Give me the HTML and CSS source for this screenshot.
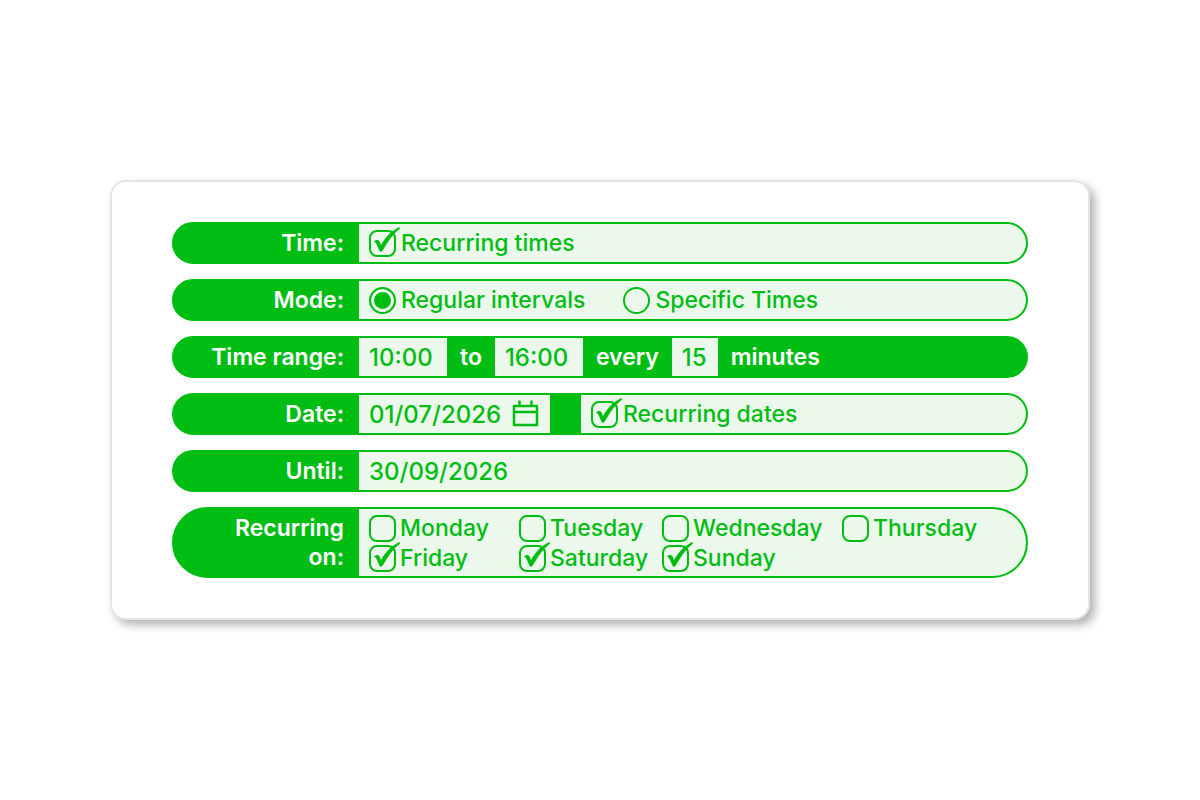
FILE: index.html
```html
<!DOCTYPE html>
<html lang="en">
<head>
    <meta charset="UTF-8">
    <title>Recurring times</title>
    <meta name="viewport" content="width=device-width, initial-scale=1.0">
    <link rel="stylesheet" href="styles.css">
</head>
<body>
    <svg class="defs" aria-hidden="true">
        <symbol id="tick" viewBox="0 0 34 30">
            <path d="M5 14.800 C6.400 12.600 9.600 12.400 10.600 14.600 L12 18 C16.500 10 22.500 3.500 30.400 0 L31 1.400 C24.500 6.500 19 14 14 23 C12.800 25.200 11.200 25.400 10.400 23.600 L8 18 C7.200 16.200 6.600 15.400 5 14.800Z"/>
        </symbol>
    </svg>

    <form class="card">
        <div class="row">
            <span class="row-label">Time:</span>
            <div class="field grow">
                <label class="option"><span class="box"><input type="checkbox" checked><svg class="tick"><use href="#tick"/></svg></span>Recurring times</label>
            </div>
        </div>

        <div class="row" role="radiogroup" aria-labelledby="modeLabel">
            <span class="row-label" id="modeLabel">Mode:</span>
            <div class="field grow modes">
                <label class="option"><input type="radio" name="mode" checked>Regular intervals</label>
                <label class="option"><input type="radio" name="mode">Specific Times</label>
            </div>
        </div>

        <div class="row">
            <label class="row-label" for="from">Time range:</label>
            <input class="text time" type="text" id="from" value="10:00">
            <label class="word" for="to">to</label>
            <input class="text time" type="text" id="to" value="16:00">
            <label class="word" for="every">every</label>
            <input class="text number" type="text" id="every" value="15">
            <span class="word">minutes</span>
        </div>

        <div class="row">
            <label class="row-label" for="date">Date:</label>
            <div class="field date">
                <input class="text" type="text" id="date" value="01/07/2026">
                <button class="calendar" type="button" aria-label="Choose date">
                    <svg width="28" height="28" viewBox="0 0 28 28">
                        <path d="M2 6H25V25H2ZM2 12H25M7.500 1.500V6M19.500 1.500V6"/>
                    </svg>
                </button>
            </div>
            <div class="field grow">
                <label class="option"><span class="box"><input type="checkbox" checked><svg class="tick"><use href="#tick"/></svg></span>Recurring dates</label>
            </div>
        </div>

        <div class="row">
            <label class="row-label" for="until">Until:</label>
            <input class="text grow" type="text" id="until" value="30/09/2026">
        </div>

        <div class="row" role="group" aria-labelledby="daysLabel">
            <span class="row-label" id="daysLabel">Recurring on:</span>
            <div class="field grow days">
                <label class="option"><span class="box"><input type="checkbox"><svg class="tick"><use href="#tick"/></svg></span>Monday</label>
                <label class="option"><span class="box"><input type="checkbox"><svg class="tick"><use href="#tick"/></svg></span>Tuesday</label>
                <label class="option"><span class="box"><input type="checkbox"><svg class="tick"><use href="#tick"/></svg></span>Wednesday</label>
                <label class="option"><span class="box"><input type="checkbox"><svg class="tick"><use href="#tick"/></svg></span>Thursday</label>
                <label class="option"><span class="box"><input type="checkbox" checked><svg class="tick"><use href="#tick"/></svg></span>Friday</label>
                <label class="option"><span class="box"><input type="checkbox" checked><svg class="tick"><use href="#tick"/></svg></span>Saturday</label>
                <label class="option"><span class="box"><input type="checkbox" checked><svg class="tick"><use href="#tick"/></svg></span>Sunday</label>
            </div>
        </div>
    </form>
</body>
</html>
```

FILE: styles.css
```css
:root {
    --green: #00bd13;
    --pale: #ecf8eb;
}

* {
    box-sizing: border-box;
}

body {
    margin: 0;
    min-height: 100vh;
    padding: 20px;
    display: flex;
    align-items: center;
    justify-content: center;
    background: white;
    color: var(--green);
    font: 500 23px/29px Inter, "Liberation Sans", sans-serif;
}

.defs {
    position: absolute;
    width: 0;
    height: 0;
}

.card {
    display: flex;
    flex-direction: column;
    gap: 15px;
    width: 100%;
    max-width: 980px;
    padding: 40px 60px;
    background: white;
    border: 2px solid #e5e5e5;
    border-radius: 16px;
    box-shadow: 5px 5px 10px rgba(0, 0, 0, 0.3);
}

.row {
    display: flex;
    min-height: 42px;
    background: var(--green);
    border: 2px solid var(--green);
    border-radius: 36px;
    overflow: hidden;
}

.row-label {
    display: flex;
    align-items: center;
    justify-content: flex-end;
    flex: none;
    width: 185px;
    padding: 0 15px 0 32px;
    color: white;
    font-weight: 600;
    text-align: right;
}

.field {
    display: flex;
    align-items: center;
    padding: 0 10px;
    background: var(--pale);
}

.grow {
    flex: 1;
}

.text {
    min-width: 0;
    margin: 0;
    padding: 0 10px;
    border: none;
    border-radius: 0;
    outline: none;
    background: var(--pale);
    color: inherit;
    font: inherit;
    font-size: 24px;
}

.time {
    width: 88px;
}

.number {
    width: 46px;
}

.word {
    display: flex;
    align-items: center;
    padding: 0 13px;
    color: white;
    font-weight: 600;
}

.date .text {
    width: 144px;
    padding: 0;
}

.date {
    width: 191px;
    margin-right: 31px;
}

.calendar {
    display: flex;
    padding: 0;
    border: none;
    background: none;
    color: inherit;
    cursor: pointer;
}

.calendar svg {
    fill: none;
    stroke: currentColor;
    stroke-width: 2.5;
    stroke-linejoin: round;
    stroke-linecap: round;
}

.option {
    display: flex;
    align-items: center;
    gap: 5px;
    height: 29px;
    white-space: nowrap;
}

.modes {
    gap: 38px;
}

.days {
    display: grid;
    grid-template-columns: 150px 143px 180px auto;
    justify-content: start;
    row-gap: 1px;
    padding: 5px 10px 3px;
}

.days .option {
    gap: 4px;
}

.box {
    position: relative;
    display: flex;
}

input[type="checkbox"],
input[type="radio"] {
    appearance: none;
    width: 27px;
    height: 27px;
    margin: 0;
    border: 2px solid var(--green);
    border-radius: 8px;
    cursor: pointer;
}

input[type="radio"] {
    border-radius: 50%;
}

input[type="radio"]:checked {
    background: var(--green);
    box-shadow: inset 0 0 0 3px var(--pale);
}

/* the tick runs out over the corner of its box */
.tick {
    position: absolute;
    left: 0;
    top: -3px;
    width: 34px;
    height: 30px;
    fill: var(--green);
    pointer-events: none;
    visibility: hidden;
}

input:checked + .tick {
    visibility: visible;
}
```
